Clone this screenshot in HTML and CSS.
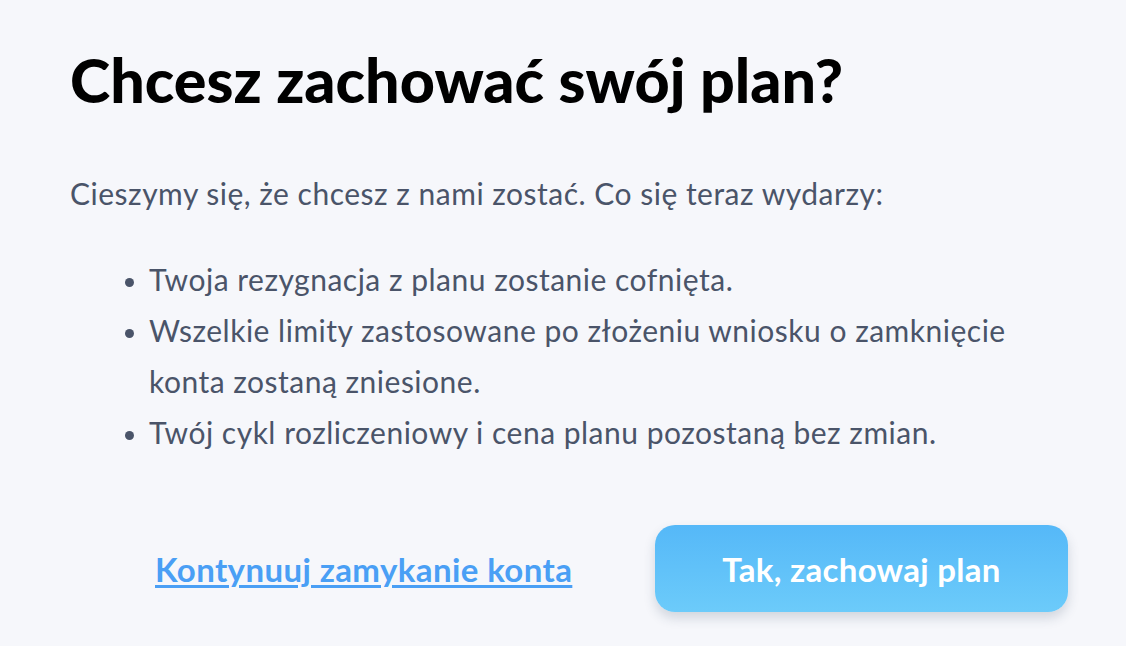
FILE: index.html
```html
<!DOCTYPE html>
<html lang="pl">
  <head>
    <meta charset="UTF-8" />
    <meta name="viewport" content="width=device-width, initial-scale=1.0" />
    <title>Chcesz zachować swój plan?</title>
    <link rel="stylesheet" href="styles.css">
  </head>
  <body>
    <main class="dialog">
      <h1 class="title">Chcesz zachować swój plan?</h1>
      <p class="intro">Cieszymy się, że chcesz z nami zostać. Co się teraz wydarzy:</p>
      <ul class="changes">
        <li>Twoja rezygnacja z planu zostanie cofnięta.</li>
        <li>Wszelkie limity zastosowane po złożeniu wniosku o zamknięcie konta zostaną zniesione.</li>
        <li>Twój cykl rozliczeniowy i cena planu pozostaną bez zmian.</li>
      </ul>
      <div class="actions">
        <a class="link" href="#">Kontynuuj zamykanie konta</a>
        <button class="button" type="button">Tak, zachowaj plan</button>
      </div>
    </main>
  </body>
</html>
```

FILE: styles.css
```css
:root {
  --background: #f6f7fb;
  --heading: #000000;
  --text: #4a5469;
  --link: #4a9ff5;
  --white: #ffffff;
}
* {
  margin: 0;
  padding: 0;
  box-sizing: border-box;
}
body {
  font-family: Lato, "Noto Sans", sans-serif;
  background: var(--background);
  color: var(--text);
  min-height: 100vh;
}
.dialog {
  padding: 44px 58px 0 70px;
  display: flex;
  flex-direction: column;
}
.title {
  color: var(--heading);
  font-size: 61px;
  font-weight: 900;
  line-height: 72px;
}
.intro {
  margin-top: 57px;
  font-size: 30px;
  letter-spacing: 0.5px;
  line-height: 40px;
}
.changes {
  margin-top: 41px;
  padding-left: 79px;
  font-size: 30px;
  letter-spacing: 0.5px;
  line-height: 51px;
}
.changes li::marker {
  font-size: 26px;
}
.actions {
  margin-top: 67px;
  display: flex;
  align-items: center;
  justify-content: space-between;
  padding-left: 85px;
}
.link {
  color: var(--link);
  font-size: 33px;
  font-weight: 700;
  letter-spacing: 0.4px;
  text-decoration: underline;
  text-decoration-thickness: 3px;
  text-underline-offset: 3px;
}
.button {
  width: 413px;
  height: 87px;
  border: none;
  border-radius: 20px;
  background: linear-gradient(180deg, #55b8f8, #6ccbfa);
  color: var(--white);
  font-family: inherit;
  font-size: 33px;
  font-weight: 700;
  letter-spacing: 0.3px;
  box-shadow: 0 6px 12px rgba(40, 60, 90, 0.18);
  cursor: pointer;
}
```
